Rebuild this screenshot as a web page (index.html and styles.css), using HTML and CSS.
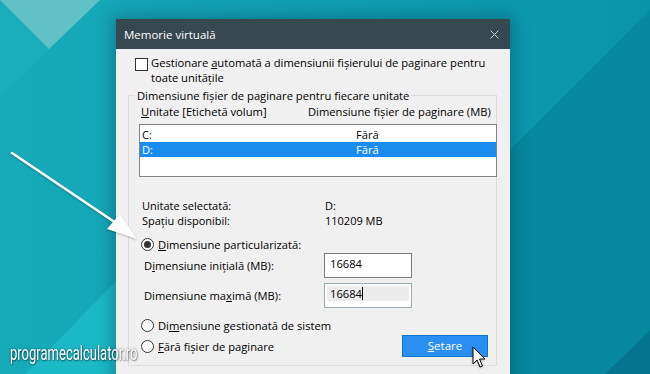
FILE: index.html
```html
<!DOCTYPE html>
<html lang="ro">
<head>
<meta charset="utf-8">
<title>Memorie virtuală</title>
<link rel="stylesheet" href="styles.css">
</head>
<body>
<svg class="desktop" width="650" height="374" viewBox="0 0 650 374" aria-hidden="true">
  <defs>
    <linearGradient id="bgGrad" x1="0" y1="0" x2="1" y2="0">
      <stop offset="0" stop-color="#17abb9"/>
      <stop offset="0.5" stop-color="#0fa0b3"/>
      <stop offset="1" stop-color="#0994a9"/>
    </linearGradient>
  </defs>
  <rect width="650" height="374" fill="url(#bgGrad)"/>
  <polygon points="0,0 49,49 0,98" fill="#1aaebb"/>
  <polygon points="0,0 100,0 49,49" fill="#62c0c7"/>
  <polygon points="25,374 135,262 135,374" fill="#1bb9c6"/>
  <polygon points="505,155 650,10 650,374 505,374" fill="#07899f"/>
  <polygon points="605,374 650,330 650,374" fill="#05758f"/>
</svg>

<div class="window">
  <div class="titlebar">
    <span class="title">Memorie virtuală</span>
    <svg class="close" width="9" height="9" viewBox="0 0 9 9" aria-hidden="true"><path d="M0.5 0.5 L8.5 8.5 M8.5 0.5 L0.5 8.5" stroke="#c9ced1" stroke-width="1"/></svg>
  </div>
  <div class="content">
    <div class="check-row">
      <span class="checkbox"></span>
      <span class="check-text">Gestionare <u>a</u>utomată a dimensiunii fișierului de paginare pentru<br>toate unitățile</span>
    </div>
    <fieldset class="group">
      <legend>Dimensiune fișier de paginare pentru fiecare unitate</legend>
      <div class="cols">
        <span><u>U</u>nitate [Etichetă volum]</span>
        <span>Dimensiune fișier de paginare (MB)</span>
      </div>
      <div class="list">
        <div class="row"><span>C:</span><span>Fără</span></div>
        <div class="row sel"><span>D:</span><span>Fără</span></div>
      </div>
      <div class="info">
        <span>Unitate selectată:</span><span>D:</span>
        <span>Spațiu disponibil:</span><span>110209 MB</span>
      </div>
      <div class="radio-row first">
        <span class="radio on"></span>
        <span><u>D</u>imensiune particularizată:</span>
      </div>
      <div class="field">
        <span class="field-label">D<u>i</u>mensiune inițială (MB):</span>
        <div class="input"><span class="val">16684</span></div>
      </div>
      <div class="field">
        <span class="field-label">Dimensiune ma<u>x</u>imă (MB):</span>
        <div class="input focus"><span class="val selbg">16684<span class="caret"></span></span></div>
      </div>
      <div class="bottom">
        <div class="radios">
          <div class="radio-row">
            <span class="radio"></span>
            <span>Di<u>m</u>ensiune gestionată de sistem</span>
          </div>
          <div class="radio-row">
            <span class="radio"></span>
            <span><u>F</u>ără fișier de paginare</span>
          </div>
        </div>
        <button class="btn" type="button"><u>S</u>etare</button>
      </div>
    </fieldset>
  </div>
</div>

<svg class="overlay" width="650" height="374" viewBox="0 0 650 374" aria-hidden="true">
  <g fill="#fff" stroke="none">
    <line x1="12" y1="153" x2="116" y2="223" stroke="#fff" stroke-width="2.6" stroke-linecap="round"/>
    <polygon points="137,239 107,229 120,214"/>
  </g>
  <path d="M473 347 L473 364 L477 360 L480 367 L482.5 366 L479.5 359 L485 359 Z" fill="#fff" stroke="#000" stroke-width="1" stroke-linejoin="miter"/>
</svg>

<div class="watermark">programecalculator.ro</div>
</body>
</html>
```

FILE: styles.css
```css
html, body {
  margin: 0;
  padding: 0;
}

body {
  width: 650px;
  height: 374px;
  overflow: hidden;
  position: relative;
  font-family: "Open Sans", "Noto Sans", sans-serif;
  background: #10a0b2;
}

.desktop {
  position: absolute;
  left: 0;
  top: 0;
}

.window {
  position: absolute;
  left: 116px;
  top: 19px;
  width: 394px;
  height: 370px;
  background: #f0f0f0;
  box-shadow: 0 0 16px 3px rgba(0, 40, 60, 0.35);
  font-size: 11.2px;
  color: #000;
}

.titlebar {
  height: 30px;
  background: #384850;
  color: #fff;
  display: flex;
  align-items: center;
  justify-content: space-between;
  padding: 0 11px 0 8px;
  font-size: 11.5px;
}

.close {
  display: block;
}

.content {
  padding: 6px 13px 0 12px;
}

.check-row {
  display: flex;
  align-items: flex-start;
  margin-left: 7px;
  line-height: 15px;
}

.checkbox {
  width: 13px;
  height: 13px;
  box-sizing: border-box;
  border: 1px solid #333;
  background: #fff;
  margin-top: 3px;
  margin-right: 3px;
  flex: none;
}

.group {
  margin: 4px 0 0 0;
  border: 1px solid #dcdcdc;
  padding: 2px 0 8px 10px;
  min-width: 0;
}

.group legend {
  padding: 0 2px;
  margin-left: -4px;
  line-height: 13px;
}

.cols {
  display: grid;
  grid-template-columns: 167px 1fr;
  padding-left: 2px;
  line-height: 15px;
}

.list {
  margin-top: 5px;
  margin-right: -1px;
  height: 53px;
  box-sizing: border-box;
  border: 1px solid #828282;
  background: #fff;
  padding-top: 2px;
}

.row {
  display: grid;
  grid-template-columns: 214px 1fr;
  height: 15px;
  line-height: 15px;
  padding-left: 2px;
}

.row.sel {
  background: #1a8cf0;
  color: #fff;
}

.info {
  margin-top: 21px;
  display: grid;
  grid-template-columns: 183px 1fr;
  font-size: 11px;
  line-height: 15px;
  padding-left: 3px;
}

.radio-row {
  display: flex;
  align-items: center;
  line-height: 15px;
  padding-left: 2px;
}

.radio-row.first {
  margin-top: 9px;
}

.radio {
  width: 13px;
  height: 13px;
  box-sizing: border-box;
  border: 1px solid #333;
  border-radius: 50%;
  background: #fff;
  margin-right: 4px;
  flex: none;
  display: flex;
  align-items: center;
  justify-content: center;
}

.radio.on::after {
  content: "";
  width: 7px;
  height: 7px;
  border-radius: 50%;
  background: #333;
}

.field {
  display: flex;
  align-items: center;
  height: 25px;
  margin-top: 1px;
}

.field + .field {
  margin-top: 5px;
}

.field-label {
  width: 180px;
  padding-left: 5px;
}

.input {
  width: 88px;
  height: 25px;
  box-sizing: border-box;
  border: 1px solid #7a7a7a;
  background: #fff;
  padding: 2px 2px 0 2px;
  line-height: 15px;
}

.input .val {
  display: block;
  padding-left: 3px;
}

.input.focus {
  border-color: #9aabb7;
}

.input .selbg {
  background: #ececec;
  height: 15px;
}

.caret {
  display: inline-block;
  width: 1px;
  height: 13px;
  background: #000;
  vertical-align: -2px;
}

.bottom {
  display: flex;
  justify-content: space-between;
  align-items: flex-start;
  margin-top: 10px;
}

.radios {
  display: flex;
  flex-direction: column;
  gap: 6px;
}

.btn {
  margin: 17px 8px 0 0;
  width: 86px;
  height: 22px;
  box-sizing: border-box;
  border: 1px solid #1470cf;
  background: #2a8ff0;
  color: #fff;
  font: inherit;
  font-size: 11.5px;
  padding: 0;
  line-height: 20px;
}

.overlay {
  position: absolute;
  left: 0;
  top: 0;
  pointer-events: none;
  filter: drop-shadow(0 1px 1px rgba(0, 0, 0, 0.25));
}

.watermark {
  position: absolute;
  left: 10px;
  top: 340px;
  font-family: "Roboto", "Liberation Sans", sans-serif;
  font-size: 21px;
  line-height: 26px;
  color: #fff;
  white-space: nowrap;
  transform: scaleX(0.62);
  transform-origin: 0 0;
  text-shadow: 0 0 3px rgba(0, 0, 0, 0.55), 1px 1px 2px rgba(0, 0, 0, 0.4);
}
```
